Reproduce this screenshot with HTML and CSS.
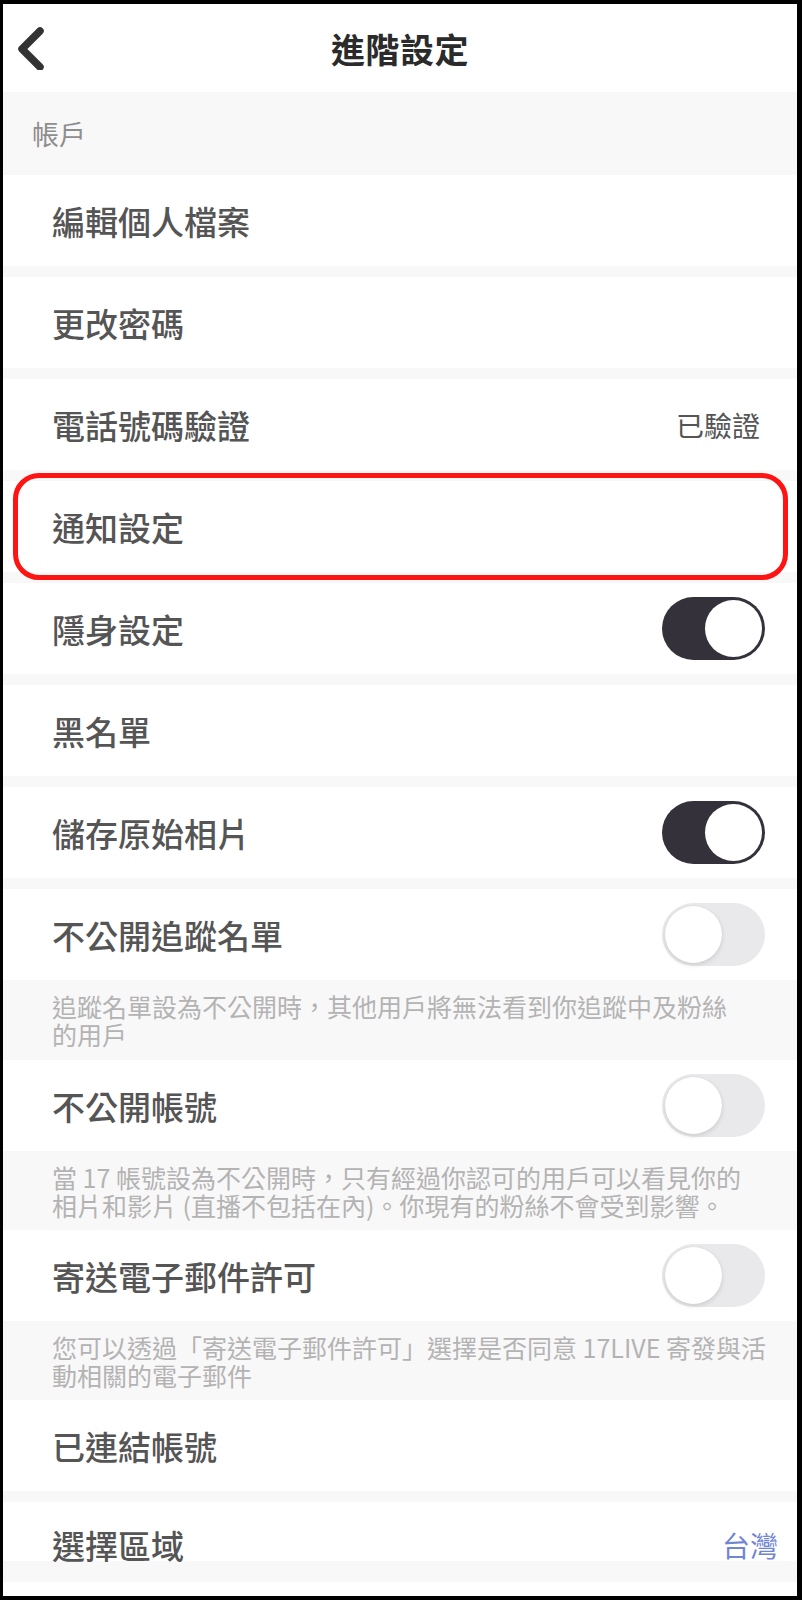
FILE: index.html
```html
<!DOCTYPE html>
<html lang="zh-Hant">
<head>
    <meta charset="UTF-8">
    <meta name="viewport" content="width=device-width, initial-scale=1.0">
    <title>進階設定</title>
    <link rel="stylesheet" href="styles.css">
</head>
<body>
    <header class="topbar">
        <button class="back" type="button" aria-label="返回">
            <svg width="30" height="44" viewBox="0 0 30 44">
                <polyline points="23,5 5,23 23,41" fill="none" stroke="#333" stroke-width="7.5" stroke-linecap="round" stroke-linejoin="round"/>
            </svg>
        </button>
        <h1>進階設定</h1>
    </header>

    <div class="section-title">帳戶</div>

    <div class="row"><span class="label">編輯個人檔案</span></div>
    <div class="row"><span class="label">更改密碼</span></div>
    <div class="row">
        <span class="label">電話號碼驗證</span>
        <span class="value">已驗證</span>
    </div>
    <div class="row highlighted"><span class="label">通知設定</span></div>
    <div class="row">
        <span class="label">隱身設定</span>
        <span class="toggle on"></span>
    </div>
    <div class="row"><span class="label">黑名單</span></div>
    <div class="row">
        <span class="label">儲存原始相片</span>
        <span class="toggle on"></span>
    </div>

    <div class="row has-desc">
        <span class="label">不公開追蹤名單</span>
        <span class="toggle"></span>
    </div>
    <p class="desc first">追蹤名單設為不公開時，其他用戶將無法看到你追蹤中及粉絲<br>的用戶</p>

    <div class="row has-desc">
        <span class="label">不公開帳號</span>
        <span class="toggle"></span>
    </div>
    <p class="desc">當 17 帳號設為不公開時，只有經過你認可的用戶可以看見你的<br>相片和影片 (直播不包括在內)。你現有的粉絲不會受到影響。</p>

    <div class="row has-desc">
        <span class="label">寄送電子郵件許可</span>
        <span class="toggle"></span>
    </div>
    <p class="desc">您可以透過「寄送電子郵件許可」選擇是否同意 17LIVE 寄發與活<br>動相關的電子郵件</p>

    <div class="row"><span class="label">已連結帳號</span></div>
    <div class="row last">
        <span class="label">選擇區域</span>
        <span class="value link">台灣</span>
    </div>
    <div class="tail-gap"></div>
    <div class="tail"></div>
</body>
</html>
```

FILE: styles.css
```css
* { box-sizing: border-box; }
body { margin: 0; width: 802px; height: 1600px; overflow: hidden; background: #f8f8f8; border-style: solid; border-color: #000; border-width: 4px 5px 4px 3px; font-family: "Noto Sans CJK TC", "Noto Sans", sans-serif; }

.topbar { height: 88px; display: flex; align-items: center; justify-content: center; position: relative; background: #fff; }
.topbar h1 { margin: 0; font-size: 34px; font-weight: 700; color: #2b2b2b; letter-spacing: 0.5px; }
.back { position: absolute; left: 14px; top: 22px; padding: 0; border: none; background: none; }

.section-title { height: 83px; display: flex; align-items: center; padding-left: 29px; background: #f8f8f8; font-size: 27px; color: #8e8e8e; }

.row { height: 91px; margin-bottom: 11px; display: flex; align-items: center; justify-content: space-between; padding: 0 32px 0 49px; background: #fff; }
.row.has-desc { margin-bottom: 0; }
.label { font-size: 33px; font-weight: 500; color: #555; }
.value { font-size: 28px; color: #555; margin-right: 5px; }
.value.link { color: #7085d4; margin-right: -13px; }

.highlighted { position: relative; }
.highlighted::after { content: ""; position: absolute; top: -8px; bottom: -8px; left: 10px; right: 9px; border: 5px solid #ff1414; border-radius: 26px; }

.toggle { width: 103px; height: 63px; border-radius: 32px; background: #e9e9eb; position: relative; }
.toggle::after { content: ""; position: absolute; top: 3px; left: 3px; width: 57px; height: 57px; border-radius: 50%; background: #fff; box-shadow: 0 2px 5px rgba(0, 0, 0, 0.12), 0 0 1px rgba(0, 0, 0, 0.1); }
.toggle.on { background: #34313a; }
.toggle.on::after { left: 43px; box-shadow: none; }

.desc { margin: 0; height: 79px; padding: 12px 20px 0 49px; background: #f8f8f8; font-size: 25px; line-height: 28px; color: #b3b3b3; }
.desc.first { height: 80px; }

.row.last { height: 59px; margin-bottom: 0; align-items: flex-end; }
.row.last .label, .row.last .value { line-height: 32px; }
.tail-gap { height: 21px; background: #f8f8f8; }
.tail { height: 20px; background: #fff; }
```
